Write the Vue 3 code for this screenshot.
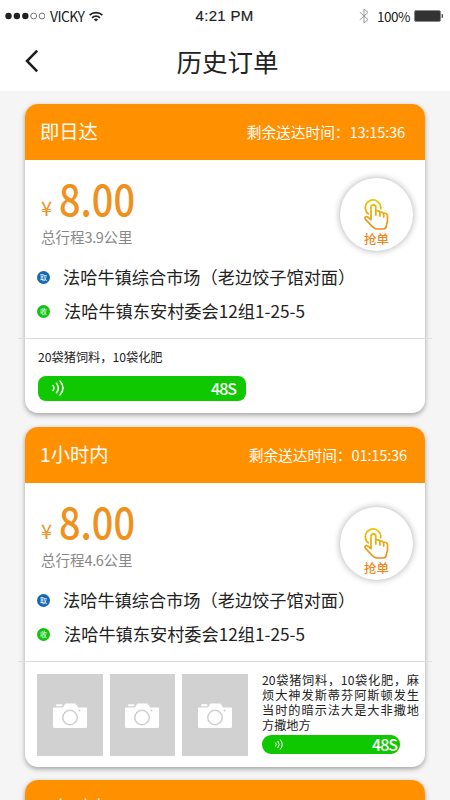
<script setup>
const orders = [
  {
    type: '即日达', left: '13:15:36', km: '3.9', goods: '20袋猪饲料，10袋化肥', photos: 0,
  },
  {
    type: '1小时内', left: '01:15:36', km: '4.6', photos: 3,
    goods: '20袋猪饲料，10袋化肥，麻烦大神发斯蒂芬阿斯顿发生当时的暗示法大是大非撒地方撒地方',
  },
  { type: '1小时内', preview: true },
]
</script>

<template>
  <div class="page">
    <header class="top">
      <div class="status">
        <div class="carrier">
          <svg class="dots" width="40" height="8" viewBox="0 0 40 8">
            <g fill="#222">
              <circle cx="3.5" cy="4" r="3.2" /><circle cx="11.9" cy="4" r="3.2" /><circle cx="20.3" cy="4" r="3.2" />
            </g>
            <g fill="none" stroke="#555" stroke-width=".8">
              <circle cx="28.7" cy="4" r="2.9" /><circle cx="37" cy="4" r="2.9" />
            </g>
          </svg>
          <span class="name">VICKY</span>
          <svg width="14" height="11" viewBox="0 0 14 11" fill="none" stroke="#222" stroke-width="1.7">
            <path d="M.6 4.2a9 9 0 0 1 12.8 0M3 6.8a5.7 5.7 0 0 1 8 0" />
            <path d="M7 10.6 4.8 8.5a3.2 3.2 0 0 1 4.4 0z" fill="#222" stroke="none" />
          </svg>
        </div>
        <span class="clock">4:21 PM</span>
        <div class="power">
          <svg width="10" height="16" viewBox="0 0 10 16" fill="none" stroke="#999" stroke-width="1">
            <path d="M.8 4.2 9 11.6 5 15V1l4 3.4L.8 11.8" />
          </svg>
          <span class="percent">100%</span>
          <svg width="30" height="12" viewBox="0 0 30 12">
            <rect x=".5" y=".5" width="26" height="11" rx="1.5" fill="#333" stroke="#888" />
            <path d="M28 4q1.6 2 0 4z" fill="#333" stroke="#333" stroke-width=".6" />
          </svg>
        </div>
      </div>
      <div class="nav">
        <svg class="back" width="14" height="24" viewBox="0 0 14 24" fill="none" stroke="#1c1c1c" stroke-width="2.5">
          <path d="M12.2 1.7 2 12l10.200 10.300" />
        </svg>
        <h1>历史订单</h1>
      </div>
    </header>

    <main class="list">
      <article v-for="(o, i) in orders" :key="i" class="card" :class="{ rich: o.photos }">
        <div class="head">
          <span class="type">{{ o.type }}</span>
          <span v-if="!o.preview" class="left">剩余送达时间：<span class="time">{{ o.left }}</span></span>
        </div>
        <template v-if="!o.preview">
          <div class="body">
            <div class="summary">
              <div class="cost">
                <div class="price"><span class="yen">¥</span><span class="amount">8.00</span></div>
                <div class="distance">总行程<span class="km">{{ o.km }}</span>公里</div>
              </div>
              <button class="grab">
                <svg width="25" height="31" viewBox="0 0 25 31" fill="none" stroke="url(#gold)" stroke-width="1.7" stroke-linejoin="round" stroke-linecap="round">
                  <defs>
                    <linearGradient id="gold" gradientUnits="userSpaceOnUse" x1="0" y1="0" x2="0" y2="31">
                      <stop offset="0" stop-color="#e6c800" /><stop offset="1" stop-color="#e88a1a" />
                    </linearGradient>
                  </defs>
                  <path d="M4.300 14.800A7.700 7.700 0 1 1 16.700 9.600" />
                  <path d="M7 20.600V8.300a2.400 2.400 0 0 1 4.800 0V16M11.800 12.200c2.600-.8 4.100 0 4.100 1.800V17M15.900 13.300c2.300-.5 3.800.2 3.800 1.900V18M19.700 14.400c2.400-.5 3.800.4 3.800 2.400V22c0 1.600-1 2.300-1 3.700 0 2.600-1.300 4.300-3.800 4.300h-5.500c-3.500 0-5.400-2.700-7.300-5L1.500 20.300c-1.300-1.700.3-3.500 2.100-2.400L7 20.600" />
                </svg>
                <span>抢单</span>
              </button>
            </div>
            <div class="address"><i class="pin from">取</i><span>法哈牛镇综合市场（老边饺子馆对面）</span></div>
            <div class="address to-row"><i class="pin to">收</i><span>法哈牛镇东安村委会12组1-25-5</span></div>
          </div>
          <div class="detail">
            <div v-if="o.photos" class="photos">
              <div v-for="n in o.photos" :key="n" class="photo">
                <svg width="34" height="25" viewBox="0 0 34 25">
                  <path d="M1 4.500H10L12.500.500H22.500L25 4.500H33q1 0 1 1V23.500q0 1.500-1.500 1.500H1.500Q0 25 0 23.500V5.500Q0 4.500 1 4.500z" fill="#fff" />
                  <rect x="3" y="1.200" width="6.500" height="2" rx="1" fill="#fff" />
                  <circle cx="17" cy="14.500" r="7.200" fill="#fff" stroke="#cfcfcf" stroke-width="1.500" />
                  <circle cx="26.500" cy="7.500" r="1" fill="#cfcfcf" />
                </svg>
              </div>
            </div>
            <div class="note">
              <p>{{ o.goods }}</p>
              <div class="voice">
                <svg viewBox="0 0 12 16" fill="none" stroke="#fff" stroke-width="1.500" stroke-linecap="round">
                  <path d="M1 5.500q1.800 2.500 0 5M4.500 3.200q3.600 4.800 0 9.600M8 1q6 7 0 14" />
                </svg>
                <span>48S</span>
              </div>
            </div>
          </div>
        </template>
      </article>
    </main>
  </div>
</template>

<style>
body { background: #f5f5f5; overflow: hidden; }
</style>

<style scoped>
.page {
  width: 450px; height: 800px; overflow: hidden; background: #f5f5f5; color: #222;
  font-family: "Noto Sans CJK SC", sans-serif;
}
.top { height: 91px; background: #fff; }
.status { height: 32px; display: grid; grid-template-columns: 1fr auto 1fr; align-items: center; padding: 0 6px 0 5px; box-sizing: border-box; }
.carrier, .power { display: flex; align-items: center; }
.name { font: 14px/20px "Noto Sans CJK SC", sans-serif; letter-spacing: -.6px; margin: 0 5px 0 5px; }
.clock { font: 15px/20px "Liberation Sans", sans-serif; letter-spacing: .3px; -webkit-text-stroke: .2px #222; }
.power { justify-content: flex-end; }
.percent { font-size: 13.500px; line-height: 20px; letter-spacing: -.5px; margin: 0 4px 0 8px; }
.nav { height: 58px; display: grid; grid-template-columns: 40px 1fr 40px; align-items: center; }
.back { margin: 0 0 0 25px; }
h1 { margin: 0; padding-left: 5px; text-align: center; font-size: 25.500px; line-height: 36px; font-weight: 400; }
.list { padding: 13px 25px 0; display: flex; flex-direction: column; gap: 14px; }
.card { height: 309px; border-radius: 13px; background: #fff; box-shadow: 0 2px 5px rgba(0, 0, 0, .35); flex: none; }
.card.rich { height: 340px; margin-bottom: -1px; }
.head {
  height: 56px; box-sizing: border-box; padding: 0 20px 2px 15px; border-radius: 13px 13px 0 0;
  background: #ff9000; color: #fff; display: flex; align-items: center; justify-content: space-between;
}
.rich .head { padding-right: 18px; }
.type { font-size: 19.300px; }
.left { font-size: 14.700px; }
.time { letter-spacing: -.2px; }
.body { height: 178px; box-sizing: border-box; padding: 18px 12px 0 12px; }
.summary { display: flex; justify-content: space-between; height: 82px; }
.cost { padding-left: 4px; margin-top: -4px; }
.price { height: 52px; display: flex; align-items: baseline; color: #f0901d; line-height: 48px; }
.yen { font-size: 20px; width: 18px; }
.amount { font-size: 43.500px; font-weight: 500; transform: scaleX(.87); transform-origin: 0 50%; }
.distance { font-size: 14.500px; line-height: 22px; color: #888; }
.km { letter-spacing: -.4px; }
.grab {
  width: 73px; height: 73px; border: 0; padding: 21px 0 0; border-radius: 50%; background: #fff;
  box-shadow: 0 0 7px rgba(0, 0, 0, .33); display: flex; flex-direction: column; align-items: center;
  color: #f08519; font: 500 12.500px/18px "Noto Sans CJK SC", sans-serif;
}
.rich .grab { margin-top: 6px; }
.address { display: flex; align-items: center; height: 34px; font-size: 17.200px; white-space: nowrap; gap: 13px; }
.address span { margin-top: -1px; }
.to-row { gap: 14px; }
.pin {
  width: 13px; height: 13px; border-radius: 50%; color: #fff; font-size: 7px; line-height: 13px;
  text-align: center; font-style: normal; flex: none;
}
.from { background: #1268b3; }
.to { background: #12c312; }
.detail { margin: 0 -7px; border-top: 1px solid #dedede; padding: 8px 20px 0; display: flex; }
.note p { margin: 0; font-size: 12.200px; line-height: 20px; }
.voice {
  margin-top: 9px; width: 208px; height: 25px; border-radius: 8px; background: #10c800; color: #fff;
  display: flex; align-items: center; justify-content: space-between; padding: 0 10px 1px 14px; box-sizing: border-box;
  font-size: 16px; font-weight: 500; letter-spacing: -1px;
}
.voice svg { width: 12px; height: 16px; }
.rich .detail { padding: 12px 13px 0 19px; justify-content: space-between; }
.photos { display: flex; gap: 7px; }
.photo { width: 65.500px; height: 82px; background: #d1d1d1; display: flex; align-items: center; justify-content: center; }
.rich .note { width: 157px; }
.rich .note p { line-height: 15px; text-align: justify; margin-top: -1px; }
.rich .voice { width: 138px; height: 19px; margin-top: 2px; padding: 0 3px 1px 13px; border-radius: 9px; }
.rich .voice svg { width: 8px; height: 11px; }
</style>
